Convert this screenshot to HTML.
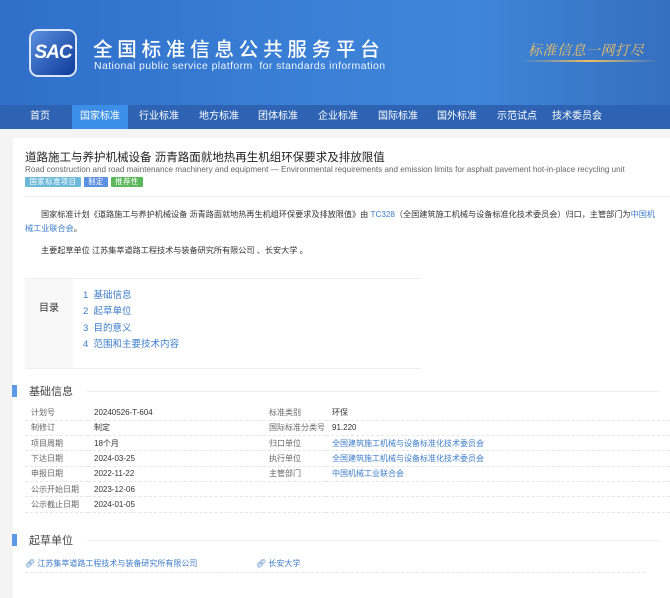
<!DOCTYPE html>
<html><head><meta charset="utf-8">
<style>
*{margin:0;padding:0;box-sizing:border-box}
body{width:670px;height:589px;overflow:hidden;background:#f4f4f4;font-family:"Liberation Sans","Noto Sans CJK SC",sans-serif;color:#333;position:relative}
.hd{position:absolute;left:0;top:0;width:670px;height:105px;background:linear-gradient(90deg,#2f6fc9 0%,#3a7fd6 45%,#3f86d8 70%,#356fc0 100%)}
.logo{position:absolute;left:29px;top:29px;width:48px;height:48px;border-radius:9px;background:linear-gradient(135deg,#5a8fe0,#0d3a99);border:2px solid #d8e4f8;color:#fff;font:italic bold 19px "Liberation Sans",sans-serif;display:flex;align-items:center;justify-content:center;letter-spacing:-1px}
.t1{position:absolute;left:93px;top:33px;color:#fff;font-size:19.5px;letter-spacing:4.8px;font-weight:500;white-space:nowrap}
.t2{position:absolute;left:94px;top:60px;color:#eef4ff;font-size:10.5px;letter-spacing:.4px;white-space:nowrap}
.slogan{position:absolute;left:528px;top:40px;color:#f0c060;font-size:14px;font-style:italic;letter-spacing:.5px;font-family:"Noto Serif CJK SC",serif}
.gline{position:absolute;left:520px;top:60px;width:140px;height:2px;background:linear-gradient(90deg,transparent,#f0c060,transparent)}
.nav{position:absolute;left:0;top:105px;width:670px;height:24px;background:#2d63b2}
.nav div{position:absolute;top:0;color:#fff;font-size:10px;line-height:24px;width:56px;text-align:center;white-space:nowrap}
.nav .on{background:#3c8ee6}
.card{position:absolute;left:13px;top:138px;width:670px;height:460px;background:#fff}
.title{position:absolute;left:25px;top:149px;font-size:11.5px;color:#222;white-space:nowrap}
.sub{position:absolute;left:25px;top:165px;font-size:8.1px;color:#666;white-space:nowrap}
.tags span{position:absolute;top:177px;height:10px;font-size:7.3px;color:#fff;line-height:10px;border-radius:1px;text-align:center;letter-spacing:.5px}
.hr{position:absolute;left:25px;width:645px;height:1px;background:#eee}
.p{position:absolute;font-size:8.15px;color:#333;white-space:nowrap}
.lk{color:#3d7cc9}
.toc{position:absolute;left:25px;top:278px;width:396px;height:91px;border-top:1px solid #eee;border-bottom:1px solid #eee}
.toc .l{position:absolute;left:0;top:0;width:48px;height:89px;background:#f8f8f8;font-size:10px;text-align:center;padding-top:20px}
.toc .r{position:absolute;left:58px;top:9px;font-size:9.5px;line-height:16.3px;color:#3d7cc9}
.sec{position:absolute;left:12px;width:658px;height:12px}
.sec .bar{position:absolute;left:0;top:0;width:5px;height:12px;background:#5b9ae8}
.sec .tx{position:absolute;left:17px;top:-2px;font-size:11px;color:#444;background:#fff;padding-right:5px}
.sec .ln{position:absolute;left:75px;top:6px;right:10px;height:1px;background:#f0f0f0}
table{position:absolute;left:25px;top:405px;border-collapse:collapse;font-size:8px}
td{height:15.3px;border-bottom:1px dashed #e6e6e6;padding:0 0 0 6px;white-space:nowrap}
td.k{color:#666;width:63px}
td.v{width:175px;color:#333}
td.k2{color:#666;width:63px}
td.v2{width:344px}
.draft{position:absolute;left:25px;top:556px;width:620px;height:17px;border-bottom:1px dashed #e6e6e6;font-size:8px}
</style></head><body>
<div class="hd">
<div class="logo">SAC</div>
<div class="t1">全国标准信息公共服务平台</div>
<div class="t2">National public service platform &nbsp;for standards information</div>
<div class="slogan">标准信息一网打尽</div>
<div class="gline"></div>
</div>
<div class="nav">
<div style="left:12px">首页</div><div class="on" style="left:72px">国家标准</div><div style="left:131px">行业标准</div><div style="left:191px">地方标准</div><div style="left:250px">团体标准</div><div style="left:310px">企业标准</div><div style="left:370px">国际标准</div><div style="left:429px">国外标准</div><div style="left:489px">示范试点</div><div style="left:546px;width:62px">技术委员会</div>
</div>
<div class="card"></div>
<div class="title">道路施工与养护机械设备 沥青路面就地热再生机组环保要求及排放限值</div>
<div class="sub">Road construction and road maintenance machinery and equipment — Environmental requirements and emission limits for asphalt pavement hot-in-place recycling unit</div>
<div class="tags"><span style="left:25px;width:56px;background:#6cb9d9">国家标准项目</span><span style="left:84px;width:24px;background:#5b8fdf">制定</span><span style="left:111px;width:32px;background:#5cb85c">推荐性</span></div>
<div class="hr" style="top:196px"></div>
<div class="p" style="left:41px;top:209px">国家标准计划《道路施工与养护机械设备 沥青路面就地热再生机组环保要求及排放限值》由 <span class="lk">TC328</span>（全国建筑施工机械与设备标准化技术委员会）归口，主管部门为<span class="lk">中国机</span></div>
<div class="p" style="left:25px;top:223px"><span class="lk">械工业联合会</span>。</div>
<div class="p" style="left:41px;top:245px">主要起草单位 江苏集萃道路工程技术与装备研究所有限公司 、长安大学 。</div>
<div class="toc"><div class="l">目录</div><div class="r">1&nbsp; 基础信息<br>2&nbsp; 起草单位<br>3&nbsp; 目的意义<br>4&nbsp; 范围和主要技术内容</div></div>
<div class="sec" style="top:385px"><div class="bar"></div><div class="ln"></div><div class="tx">基础信息</div></div>
<table>
<tr><td class="k">计划号</td><td class="v">20240526-T-604</td><td class="k2">标准类别</td><td class="v2">环保</td></tr>
<tr><td class="k">制修订</td><td class="v">制定</td><td class="k2">国际标准分类号</td><td class="v2">91.220</td></tr>
<tr><td class="k">项目周期</td><td class="v">18个月</td><td class="k2">归口单位</td><td class="v2 lk">全国建筑施工机械与设备标准化技术委员会</td></tr>
<tr><td class="k">下达日期</td><td class="v">2024-03-25</td><td class="k2">执行单位</td><td class="v2 lk">全国建筑施工机械与设备标准化技术委员会</td></tr>
<tr><td class="k">申报日期</td><td class="v">2022-11-22</td><td class="k2">主管部门</td><td class="v2 lk">中国机械工业联合会</td></tr>
<tr><td class="k">公示开始日期</td><td class="v">2023-12-06</td><td class="k2"></td><td class="v2"></td></tr>
<tr><td class="k">公示截止日期</td><td class="v">2024-01-05</td><td class="k2"></td><td class="v2"></td></tr>
</table>
<div class="sec" style="top:534px"><div class="bar"></div><div class="ln"></div><div class="tx">起草单位</div></div>
<div class="draft"><span class="lk" style="position:absolute;left:0;top:2px">&#x1F517;&#xFE0E; 江苏集萃道路工程技术与装备研究所有限公司</span><span class="lk" style="position:absolute;left:231px;top:2px">&#x1F517;&#xFE0E; 长安大学</span></div>
</body></html>
